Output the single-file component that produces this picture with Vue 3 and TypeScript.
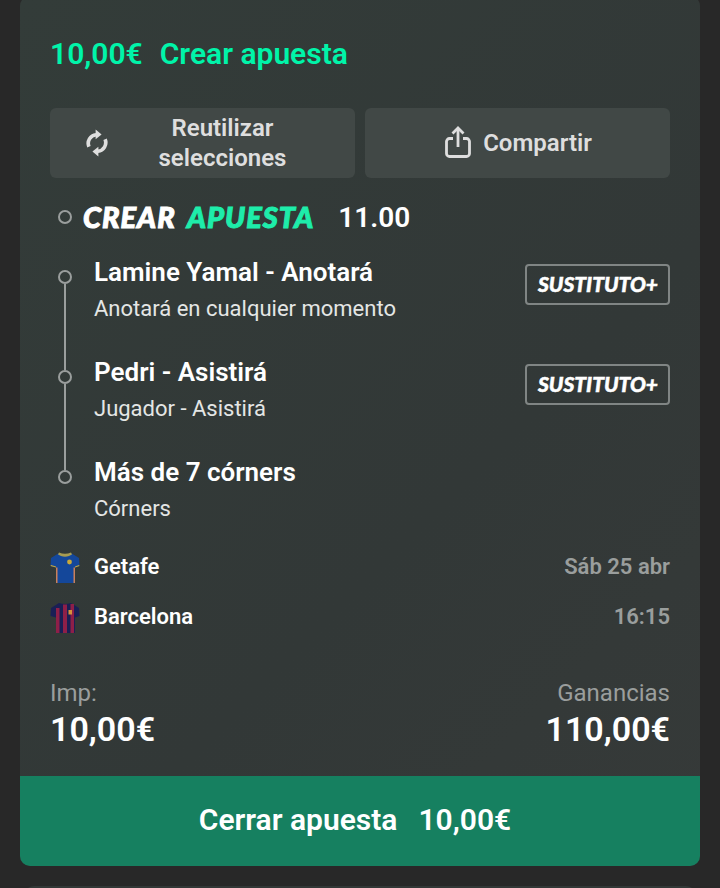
<script setup lang="ts">
interface Leg {
  title: string
  sub: string
  substitute: boolean
}

const legs: Leg[] = [
  { title: 'Lamine Yamal - Anotará', sub: 'Anotará en cualquier momento', substitute: true },
  { title: 'Pedri - Asistirá', sub: 'Jugador - Asistirá', substitute: true },
  { title: 'Más de 7 córners', sub: 'Córners', substitute: false },
]
</script>

<template>
  <div class="page">
    <div class="card">
      <div class="content">
        <div class="header">
          <span>10,00€</span>
          <span>Crear apuesta</span>
        </div>

        <div class="actions">
          <button class="action reuse">
            <svg class="sync" viewBox="0 0 24 30" width="22" height="30">
              <path d="M3.200 19A9.400 9.400 0 0 1 11 6" fill="none" stroke="currentColor" stroke-width="4" />
              <path d="M10.500 0.200L17 5.600L10.500 11Z" fill="currentColor" />
              <path d="M20.800 11A9.400 9.400 0 0 1 13 24" fill="none" stroke="currentColor" stroke-width="4" />
              <path d="M13.500 19L7 24.400L13.500 29.800Z" fill="currentColor" />
            </svg>
            <span class="reuse-label">Reutilizar selecciones</span>
          </button>
          <button class="action share">
            <svg viewBox="0 0 26 32" width="26" height="32" fill="none" stroke="currentColor" stroke-width="2.800">
              <path d="M8 12.500H4.500A3 3 0 0 0 1.500 15.500V27.500A3 3 0 0 0 4.500 30.500H21.500A3 3 0 0 0 24.500 27.500V15.500A3 3 0 0 0 21.500 12.500H18" />
              <path d="M13 21V2.500" />
              <path d="M7.500 7.500L13 2L18.500 7.500" />
            </svg>
            <span>Compartir</span>
          </button>
        </div>

        <div class="brand-row">
          <span class="dot"></span>
          <span class="brand">CREAR <em>APUESTA</em></span>
          <span class="odds">11.00</span>
        </div>

        <div class="legs">
          <div v-for="(leg, i) in legs" :key="leg.title" class="leg">
            <div class="rail">
              <span class="dot"></span>
              <span v-if="i < legs.length - 1" class="line"></span>
            </div>
            <div class="leg-text">
              <div class="leg-title">{{ leg.title }}</div>
              <div class="leg-sub">{{ leg.sub }}</div>
            </div>
            <div v-if="leg.substitute" class="badge">SUSTITUTO+</div>
          </div>
        </div>

        <div class="teams">
          <div class="team">
            <svg class="shirt" viewBox="0 0 30 32" width="30" height="32">
              <path d="M9 1L1 6L0.500 14L6 15.500V31H25V15.500L29.500 14L29 6L21 1Q15 4 9 1Z" fill="#14479a" />
              <path d="M9 0.500Q15 3 21 0.500L22 2.500L19 4Q15 5.500 11 4L8 2.500Z" fill="#a89c50" />
              <path d="M6 15.500V31H7.500V15.500Z" fill="#c9805a" />
              <path d="M23.500 15.500V31H25V15.500Z" fill="#c9805a" />
              <path d="M1 13L6 14.500V15.500L0.500 14Z" fill="#c9a93a" />
              <path d="M29 13L25 14.500V15.500L29.500 14Z" fill="#c9a93a" />
              <circle cx="19.500" cy="10" r="2.400" fill="#c9a93a" />
            </svg>
            <span class="team-name">Getafe</span>
            <span class="team-meta">Sáb 25 abr</span>
          </div>
          <div class="team">
            <svg class="shirt" viewBox="0 0 30 32" width="30" height="32">
              <path d="M9 1L1 6L0.500 14L6 15.500V31H25V15.500L29.500 14L29 6L21 1Q15 3 9 1Z" fill="#1a1f55" />
              <path d="M6 6H9.500V31H6ZM13 2.500H17V31H13ZM20.500 2H24V31H20.500Z" fill="#8e1f48" />
              <rect x="18.500" y="8" width="3.500" height="4.500" fill="#d8913a" />
            </svg>
            <span class="team-name">Barcelona</span>
            <span class="team-meta">16:15</span>
          </div>
        </div>

        <div class="totals">
          <div>
            <div class="total-label">Imp:</div>
            <div class="total-value">10,00€</div>
          </div>
          <div class="right">
            <div class="total-label">Ganancias</div>
            <div class="total-value">110,00€</div>
          </div>
        </div>
      </div>

      <div class="close">
        <span>Cerrar apuesta</span>
        <span>10,00€</span>
      </div>
    </div>
    <div class="next-card"></div>
  </div>
</template>

<style>
html,
body {
  margin: 0;
  background: #282828;
}
</style>

<style scoped>
.page {
  display: flex;
  flex-direction: column;
  height: 888px;
  overflow: hidden;
  padding: 0 20px;
  box-sizing: border-box;
  background: #282828;
  font-family: Roboto, sans-serif;
  color: #fff;
}

.card {
  flex: none;
  height: 870px;
  margin-top: -4px;
  border-radius: 10px;
  overflow: hidden;
  display: flex;
  flex-direction: column;
  background: linear-gradient(135deg, #333c39 0%, #323837 60%, #363a39 100%);
}

.content {
  flex: 1;
  padding: 0 30px;
}

.header {
  display: flex;
  gap: 17px;
  height: 112px;
  box-sizing: border-box;
  padding-top: 40px;
  font-size: 30px;
  line-height: 36px;
  font-weight: 600;
  color: #00f4a9;
}

.actions {
  display: grid;
  grid-template-columns: 1fr 1fr;
  gap: 10px;
}

.action {
  min-width: 0;
  height: 70px;
  display: flex;
  align-items: center;
  justify-content: center;
  gap: 12px;
  border: 0;
  border-radius: 6px;
  background: #414846;
  color: #dedede;
  font-family: inherit;
  font-size: 24px;
  line-height: 30px;
  font-weight: 600;
  padding: 0;
}

.reuse {
  justify-content: flex-start;
  padding-left: 36px;
}

.reuse-label {
  flex: 1;
  padding: 0 30px 0 0;
  text-align: center;
}

.share {
  padding-left: 2px;
}

.share svg {
  margin-bottom: 3px;
}

.dot {
  flex: none;
  width: 14px;
  height: 14px;
  border: 2px solid #9a9e9d;
  border-radius: 50%;
  box-sizing: border-box;
}

.brand-row {
  display: flex;
  align-items: center;
  height: 78px;
  padding-left: 8px;
}

.brand {
  margin-left: 11px;
  margin-bottom: 2px;
  font-family: Lato, sans-serif;
  font-size: 29px;
  font-weight: 900;
  font-style: italic;
  letter-spacing: 1px;
  -webkit-text-stroke: 1px currentColor;
}

.brand em {
  margin-left: 4px;
  color: #1eedaa;
}

.odds {
  margin-left: 24px;
  font-size: 28px;
  font-weight: 600;
}

.legs {
  display: flex;
  flex-direction: column;
}

.leg {
  display: flex;
  height: 100px;
}

.rail {
  flex: none;
  width: 44px;
  padding-left: 8px;
  box-sizing: border-box;
  display: flex;
  flex-direction: column;
  align-items: flex-start;
  padding-top: 14px;
}

.line {
  width: 2px;
  flex: 1;
  margin-left: 6px;
  margin-bottom: -14px;
  background: #9a9e9d;
}

.leg-text {
  flex: 1;
}

.leg-title {
  font-size: 26px;
  line-height: 32px;
  font-weight: 600;
}

.leg-sub {
  margin-top: 6px;
  font-size: 22px;
  line-height: 30px;
  color: #e4e6e5;
}

.badge {
  align-self: flex-start;
  margin-top: 8px;
  width: 145px;
  height: 41px;
  box-sizing: border-box;
  border: 2px solid #808584;
  border-radius: 4px;
  padding: 0 0 2px 1px;
  display: flex;
  align-items: center;
  justify-content: center;
  font-family: Lato, sans-serif;
  font-size: 21px;
  font-weight: 900;
  font-style: italic;
  -webkit-text-stroke: 0.5px currentColor;
}

.teams {
  margin-top: -10px;
  display: flex;
  flex-direction: column;
  gap: 10px;
}

.team {
  display: flex;
  align-items: center;
  height: 40px;
}

.shirt {
  flex: none;
  margin-top: 3px;
  margin-right: 14px;
}

.team-name {
  flex: 1;
  font-size: 22px;
  font-weight: 600;
}

.team-meta {
  font-size: 22px;
  font-weight: 600;
  color: #9a9e9d;
}

.totals {
  margin-top: 42px;
  display: flex;
  justify-content: space-between;
}

.right {
  text-align: right;
}

.total-label {
  font-size: 24px;
  line-height: 30px;
  color: #9a9e9d;
}

.total-value {
  margin-top: 1px;
  font-size: 34px;
  line-height: 40px;
  font-weight: 600;
}

.close {
  flex: none;
  height: 90px;
  display: flex;
  align-items: center;
  justify-content: center;
  gap: 21px;
  background: #168060;
  font-size: 30px;
  font-weight: 600;
  padding: 0 10px 4px 0;
  box-sizing: border-box;
}

.next-card {
  flex: none;
  height: 10px;
  margin: 20px 4px 0;
  background: #333837;
  border-radius: 10px 10px 0 0;
}
</style>
